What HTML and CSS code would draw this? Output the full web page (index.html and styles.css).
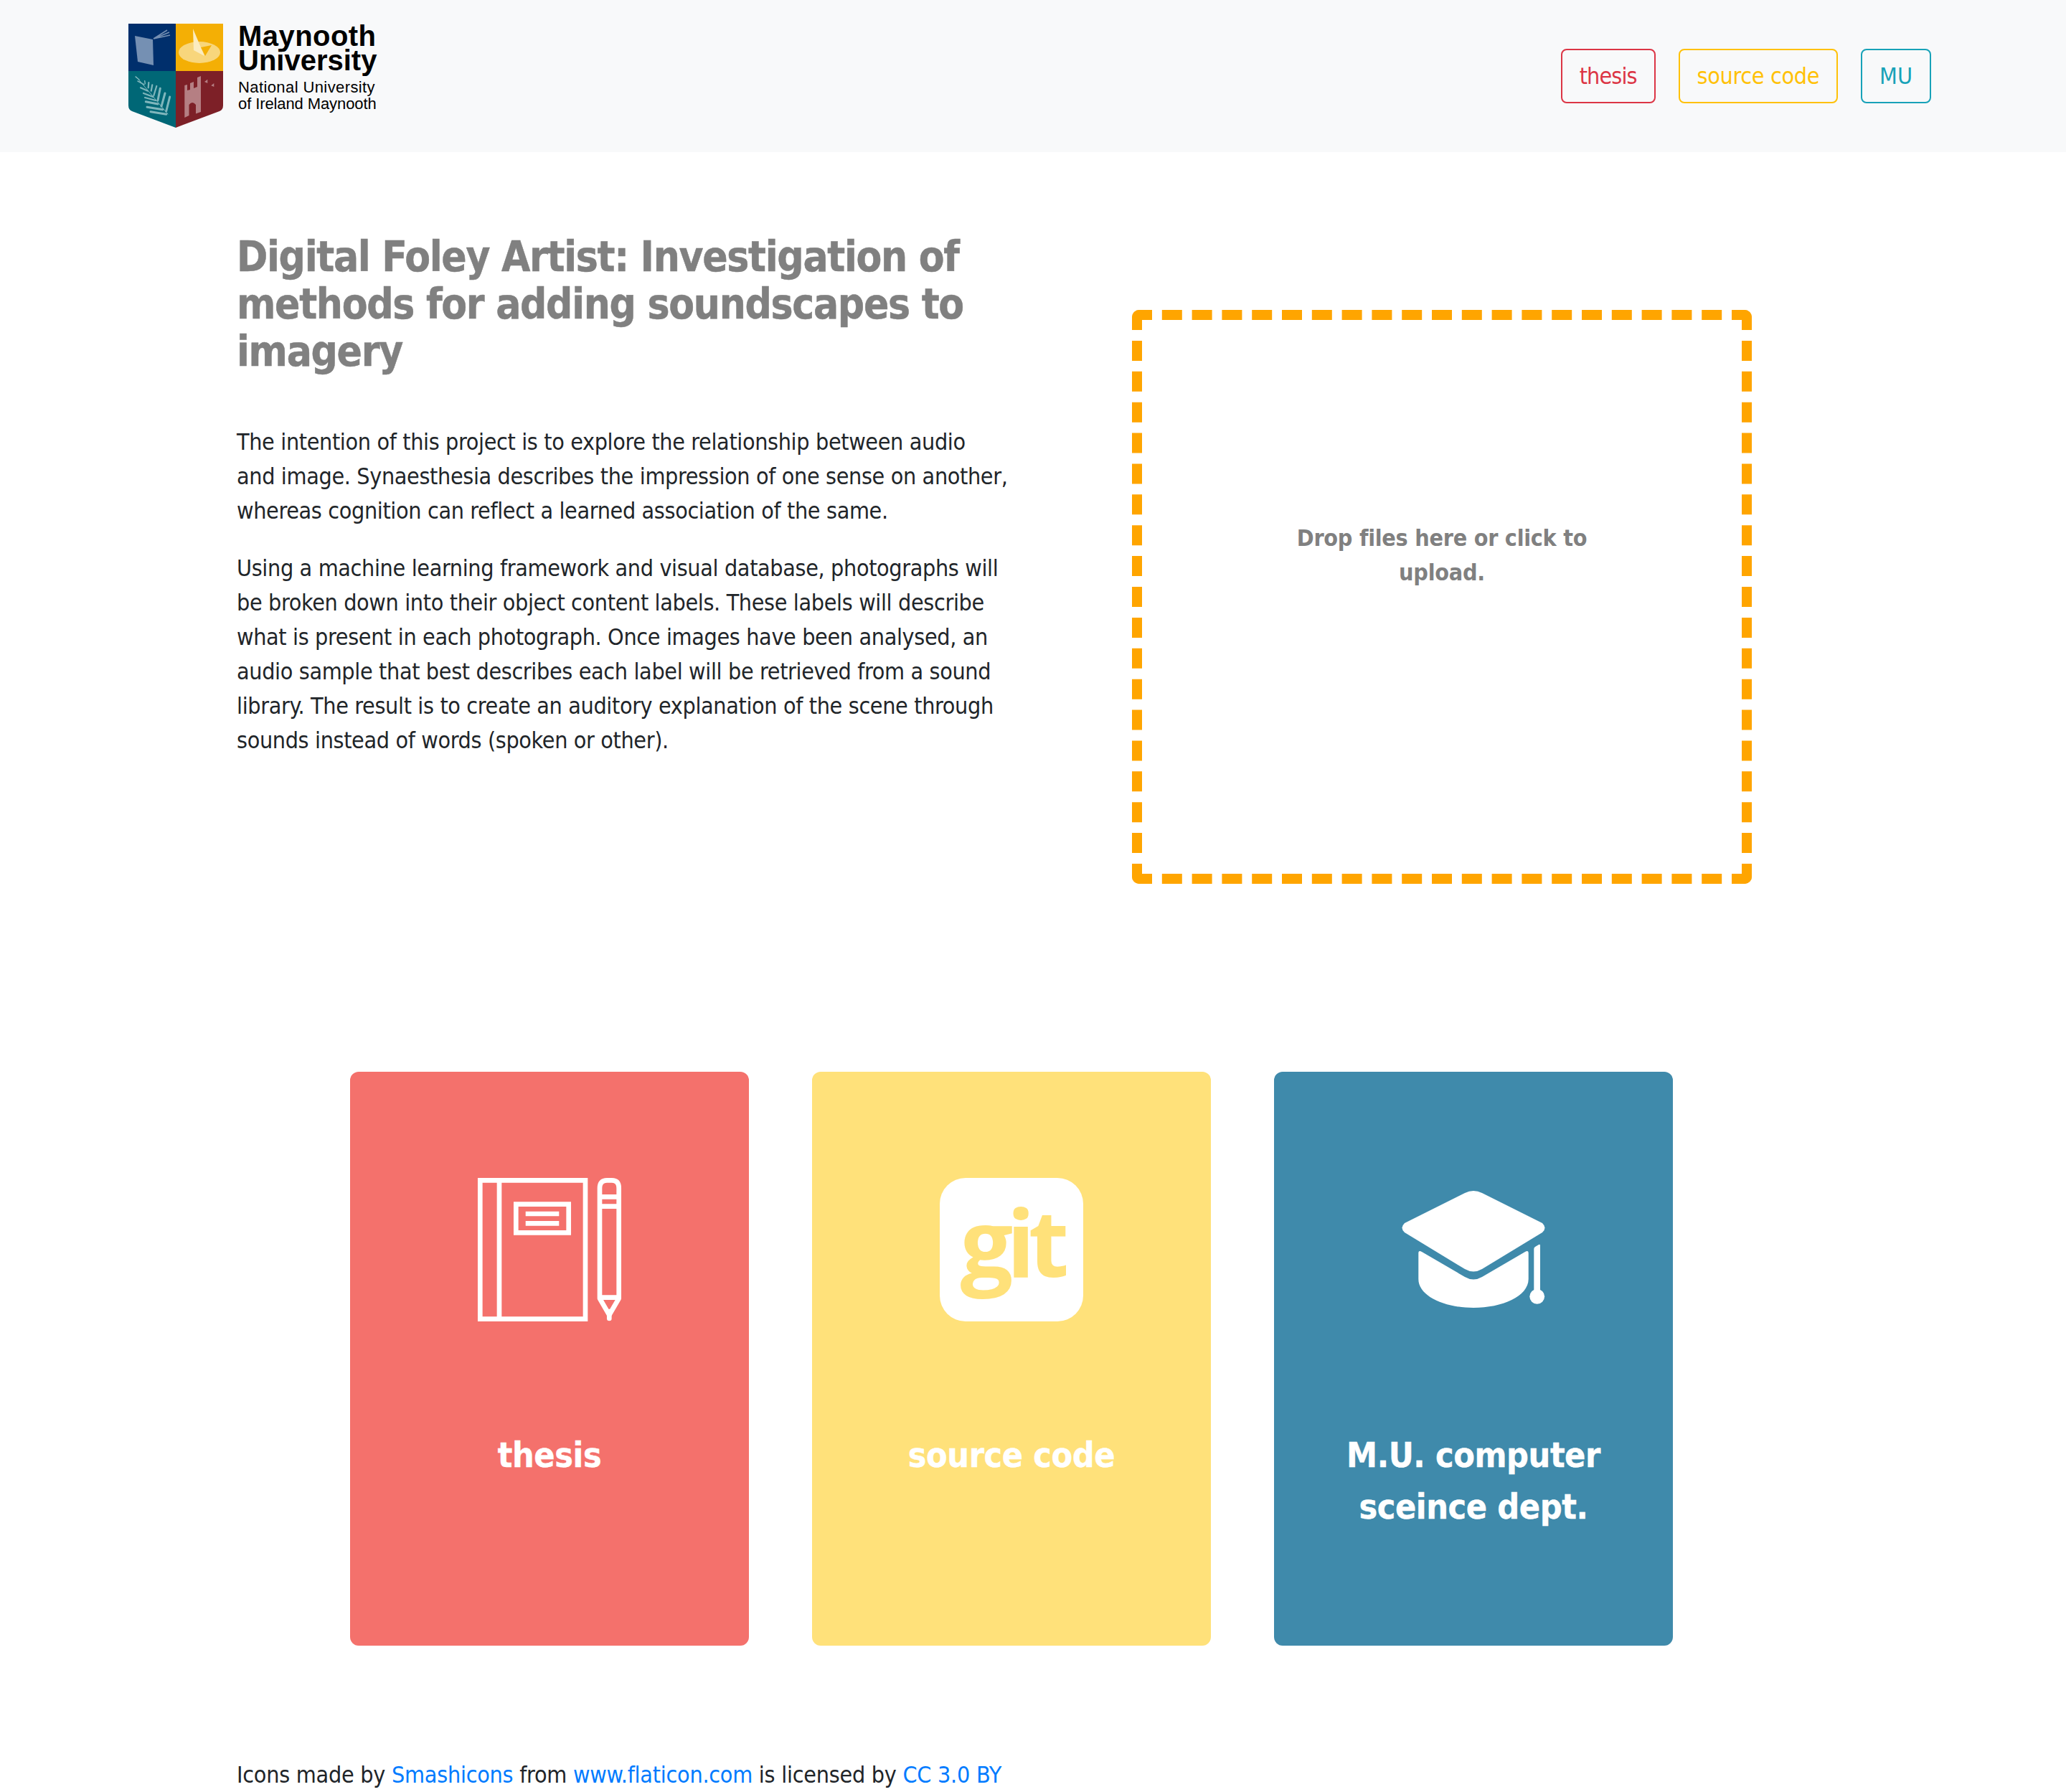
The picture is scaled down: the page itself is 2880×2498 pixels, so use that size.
FILE: index.html
```html
<!DOCTYPE html>
<html lang="en">
<head>
    <meta charset="UTF-8">
    <meta name="viewport" content="width=device-width, initial-scale=1.0">
    <title>Digital Foley Artist</title>
    <link rel="stylesheet" href="styles.css">
</head>
<body>
    <nav class="navbar">
        <a class="logo" href="#">
            <svg class="shield" viewBox="0 0 132 146">
                <path fill="#002f6c" d="M0 0H66V66H0Z"/>
                <path fill="#f4af05" d="M66 0H132V66H66Z"/>
                <path fill="#006776" d="M0 66H66V145L5 122Q0 120 0 114Z"/>
                <path fill="#7d2027" d="M66 66H132V114Q132 120 127 122L66 145Z"/>
                <path fill="#7590b3" d="M9 17L34 22L35 58L13 53Z"/>
                <path stroke="#7590b3" stroke-width="1.5" fill="none" d="M35 21L54 9M35 21L57 12M35 21L58 16"/>
                <ellipse cx="99" cy="40" rx="29" ry="15" fill="#f8d67c"/>
                <path fill="#fbecc0" d="M90 7L106 45L91 37Z"/>
                <path fill="#f4af05" d="M101 33L116 30L107 45Z"/>
                <g stroke="#7fb6bc" stroke-linecap="round" fill="none">
                    <path stroke-width="1" d="M11 74L55 126"/>
                    <path stroke-width="3" d="M52.7 122L57.7 102M46 115.3L51 97M41 107L44.3 90.3"/>
                    <path stroke-width="2.2" d="M35.3 100.3L39.3 87M31.7 93.7L33.3 85.3M27.7 89.3L28.3 82"/>
                    <path stroke-width="1.5" d="M23.3 83.7L22.7 79.7M10 74L15 78M13 80L22 85"/>
                    <path stroke-width="3" d="M31 122.7L52.7 126.3M26 116.3L47.7 119.7M24.3 108.7L41 112"/>
                    <path stroke-width="2.2" d="M23 103L38 107M21 97L34.3 102M17 89.3L27 93.7"/>
                </g>
                <path fill="#b57f83" d="M78.3 131V86L82 85V93L86 92V83L91 81V90L96 88V75L101 73V123L94 125.5V113Q89 107 84.5 113V128Z"/>
                <path fill="#b57f83" d="M106 81L110.3 77.7V83ZM115.3 86.3L119.3 83V88Z"/>
            </svg>
            <span class="logo-text">
                <span class="logo-name">Maynooth<br><span class="logo-name-second">University</span></span>
                <span class="logo-sub"><span class="logo-sub-first">National University</span><br>of Ireland Maynooth</span>
            </span>
        </a>
        <div class="nav-links">
            <a class="btn btn-red" href="#">thesis</a>
            <a class="btn btn-yellow" href="#">source code</a>
            <a class="btn btn-blue" href="#">MU</a>
        </div>
    </nav>

    <section class="intro">
        <div class="intro-text">
            <h1>Digital Foley Artist: Investigation of methods for adding soundscapes to imagery</h1>
            <p>The intention of this project is to explore the relationship between audio<br>and image. Synaesthesia describes the impression of one sense on another, whereas cognition can reflect a learned association of the same.</p>
            <p>Using a machine learning framework and visual database, photographs will be broken down into their object content labels. These labels will describe what is present in each photograph. Once images have been analysed, an audio sample that best describes each label will be retrieved from a sound library. The result is to create an auditory explanation of the scene through sounds instead of words (spoken or other).</p>
        </div>
        <div class="dropzone">Drop files here or click to upload.</div>
    </section>

    <section class="cards">
        <a class="card card-red" href="#">
            <svg class="icon" viewBox="0 0 200 200" fill="none" stroke="#fff" stroke-width="6.67">
                <path d="M3.3 3.3H150V196.7H3.3Z"/>
                <path d="M30 3.3V196.7"/>
                <path d="M53.3 36.7H126.7V76.3H53.3Z"/>
                <path d="M66.7 50H113.3M66.7 63.3H113.3"/>
                <path stroke-linejoin="round" d="M170 168V14Q170 3.3 180 3.3H187Q196.7 3.3 196.7 14V168L183.3 191Z"/>
                <path d="M170 26.3H196.7M170 39.7H196.7M170 166.7H196.7"/>
                <path stroke-linecap="round" d="M183.3 186V196"/>
            </svg>
            <span class="card-title">thesis</span>
        </a>
        <a class="card card-yellow" href="#">
            <span class="git-icon">git</span>
            <span class="card-title">source code</span>
        </a>
        <a class="card card-blue" href="#">
            <svg class="icon" viewBox="0 0 200 200" fill="#fff">
                <path d="M88 21Q100 15 112 21L196 63Q203 69.7 196 76L112 127Q100 134 88 127L4 76Q-3 69.7 4 63Z"/>
                <path d="M23.3 105Q23.3 100 28 103L88 138Q100 145 112 138L172 103Q176.7 100 176.7 105V141C176.7 165 140 181 100 181C60 181 23.3 165 23.3 141Z"/>
                <path d="M184.3 99Q184.3 97 186 96L191 93Q193 92 193 94V156H184.3Z"/>
                <circle cx="188.7" cy="165.3" r="10.4"/>
            </svg>
            <span class="card-title">M.U. computer sceince dept.</span>
        </a>
    </section>

    <footer class="credits">
        Icons made by <a href="#">Smashicons</a> from <a href="#">www.flaticon.com</a> is licensed by <a href="#">CC 3.0 BY</a>
    </footer>
</body>
</html>
```

FILE: styles.css
```css
body {
    font-family: "DejaVu Sans Condensed", "DejaVu Sans", sans-serif;
    font-size: 32px;
    line-height: 1.5;
    color: #212529;
    background: #fff;
    margin: 0;
}

a {
    color: #007bff;
    text-decoration: none;
}

.navbar {
    display: flex;
    justify-content: space-between;
    align-items: center;
    height: 212px;
    padding: 0 188px 0 179px;
    background-color: #f8f9fa;
}

.logo {
    display: flex;
    gap: 21px;
    color: #000;
    font-family: "Liberation Sans", sans-serif;
}

.shield {
    width: 132px;
    height: 146px;
}

.logo-text {
    display: flex;
    flex-direction: column;
}

.logo-name {
    font-size: 40px;
    font-weight: bold;
    line-height: 34px;
    letter-spacing: 0.45px;
    margin-bottom: 9px;
}

.logo-name-second {
    letter-spacing: 0;
}

.logo-sub {
    font-size: 22px;
    line-height: 23px;
    letter-spacing: -0.1px;
}

.logo-sub-first {
    letter-spacing: 0.4px;
}

.nav-links {
    display: flex;
    gap: 32px;
}

.btn {
    padding: 12px 24px;
    border: 2px solid;
    border-radius: 8px;
}

.btn-red {
    color: #dc3545;
    letter-spacing: -0.9px;
}

.btn-yellow {
    color: #ffc107;
    letter-spacing: -0.33px;
}

.btn-blue {
    color: #17a2b8;
}

.intro {
    display: flex;
    padding: 113px 0 0 330px;
}

.intro-text {
    width: 1090px;
    margin-right: 158px;
}

h1 {
    font-size: 58px;
    line-height: 66px;
    letter-spacing: -1.3px;
    color: #808080;
    margin: 0 0 69px;
    -webkit-text-stroke: 0.5px #808080;
}

p {
    margin: 0 0 32px;
    letter-spacing: -0.36px;
}

.dropzone {
    box-sizing: border-box;
    width: 864px;
    height: 800px;
    margin-top: 107px;
    padding: 280px 200px 0;
    border: 14px dashed orange;
    border-radius: 10px;
    color: #808080;
    font-weight: bold;
    text-align: center;
    letter-spacing: -0.27px;
}

.cards {
    display: flex;
    gap: 88px;
    padding: 262px 0 0 488px;
}

.card {
    box-sizing: border-box;
    width: 556px;
    height: 800px;
    padding: 148px 60px 0;
    border-radius: 12px;
    color: #fff;
    text-align: center;
}

.card-red {
    background-color: #f4716c;
}

.card-yellow {
    background-color: #ffe17a;
}

.card-blue {
    background-color: #3f8aab;
}

.icon {
    display: block;
    width: 200px;
    height: 200px;
    margin: 0 auto;
    overflow: visible;
}

.git-icon {
    display: block;
    width: 200px;
    height: 200px;
    margin: 0 auto;
    border-radius: 36px;
    background: #fff;
    color: #ffe17a;
    font-family: "Open Sans", sans-serif;
    font-size: 130px;
    font-weight: bold;
    line-height: 176px;
    letter-spacing: -9px;
}

.card-title {
    display: block;
    margin-top: 150px;
    font-size: 48px;
    font-weight: bold;
    letter-spacing: -0.4px;
    -webkit-text-stroke: 0.4px #fff;
}

.credits {
    padding: 156px 0 0 330px;
    letter-spacing: -0.26px;
}
```
